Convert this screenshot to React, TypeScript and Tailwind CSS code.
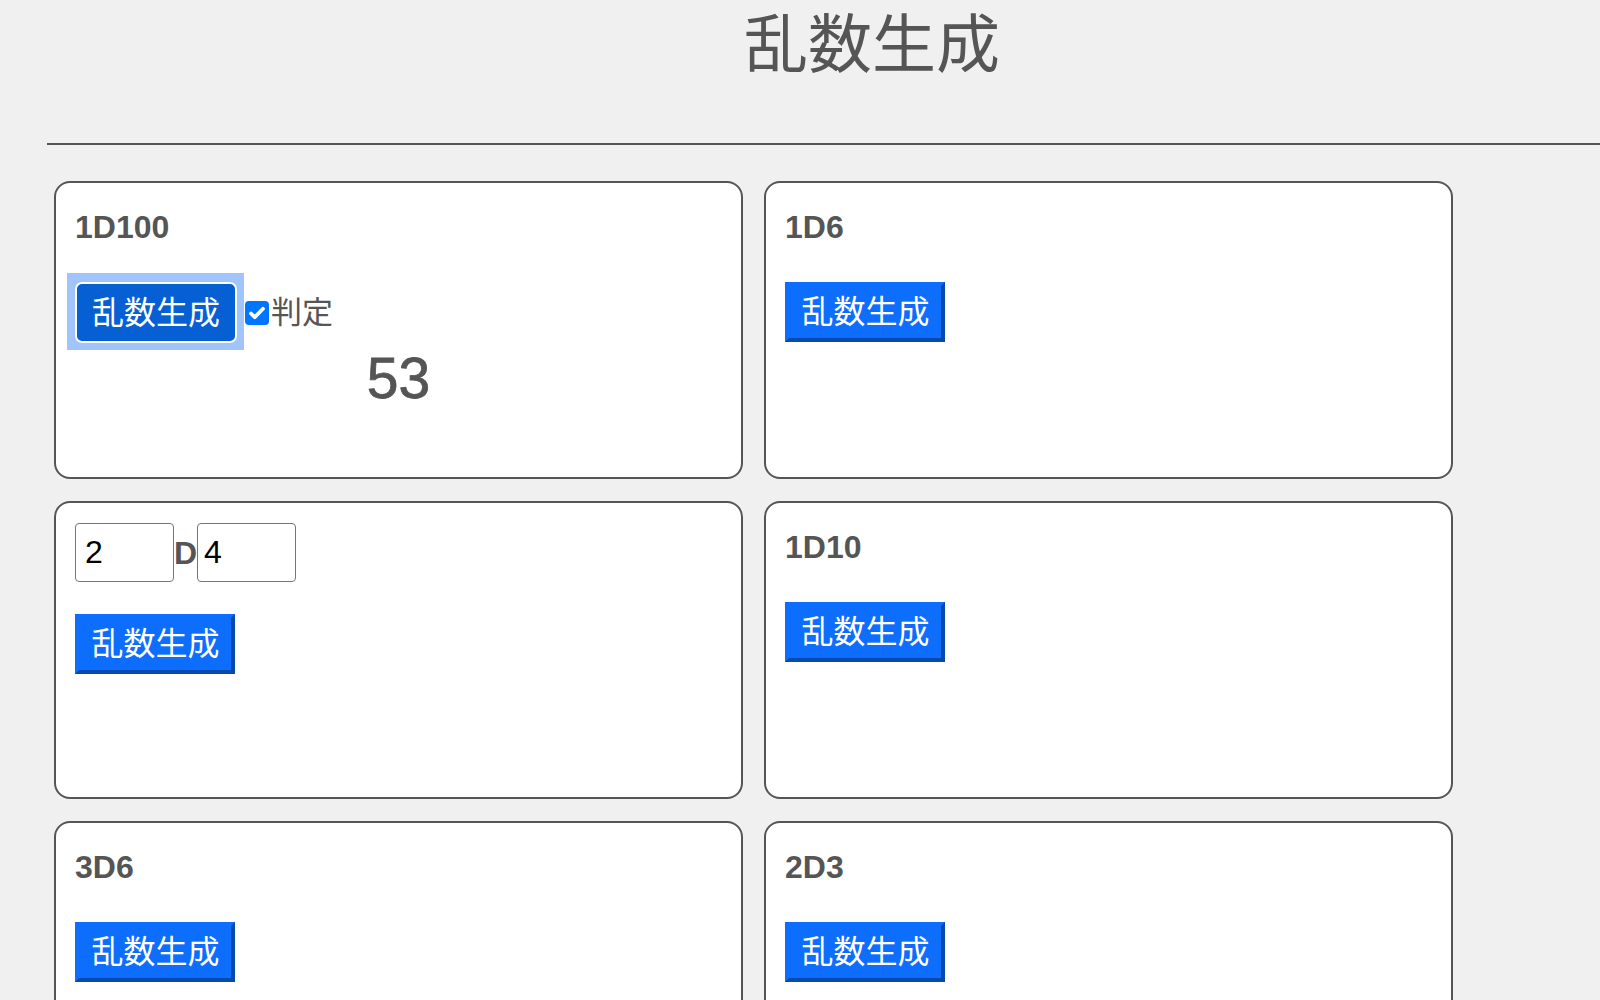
import { useState } from "react"

const font = { fontFamily: '"Liberation Sans", "Noto Sans CJK JP", sans-serif' }

function GenButton({ focused = false }: { focused?: boolean }) {
  if (focused) {
    return (
      <span className="relative inline-block">
        <span className="absolute -left-[8px] -right-[7px] -top-[9px] -bottom-[7px] bg-[#a1c4fd]" />
        <button className="relative flex h-[61px] w-[162px] items-center justify-center rounded-[7px] border-2 border-white bg-[#0660d4] text-[32px] leading-none text-white">
          乱数生成
        </button>
      </span>
    )
  }
  return (
    <button className="flex h-[60px] w-[160px] items-center justify-center border-4 border-[#0d6efd] border-b-[#0849ae] border-r-[#0849ae] bg-[#0d6efd] pl-[1px] text-[32px] leading-none text-white">
      乱数生成
    </button>
  )
}

function Card({ children }: { children: React.ReactNode }) {
  return (
    <div className="h-[298px] rounded-2xl border-2 border-[#555] bg-white px-[19px] py-[20px]">
      {children}
    </div>
  )
}

function DiceCard({ label }: { label: string }) {
  return (
    <Card>
      <div className="mt-[6px] text-[32px] font-bold leading-[37px]">{label}</div>
      <div className="mt-[36px]">
        <GenButton />
      </div>
    </Card>
  )
}

export default function App() {
  const [checked, setChecked] = useState(true)
  const [count, setCount] = useState("2")
  const [sides, setSides] = useState("4")

  return (
    <div className="h-screen w-screen overflow-hidden bg-[#f0f0f0] text-[#555]" style={font}>
      <div className="ml-[47px] w-[1650px]">
        <h1 className="pt-[8px] text-center text-[64px] font-normal leading-[74px]">乱数生成</h1>
        <hr className="mt-[61px] border-0 border-t-2 border-[#555]" />

        <div className="ml-[7px] mt-[36px] grid grid-cols-[689px_689px] gap-x-[21px] gap-y-[22px]">
          {/* 1D100 with 判定 */}
          <Card>
            <div className="mt-[6px] text-[32px] font-bold leading-[37px]">1D100</div>
            <div className="mt-[36px] flex items-center">
              <GenButton focused />
              <button
                onClick={() => setChecked(!checked)}
                className={
                  "ml-[8px] flex h-[24px] w-[24px] items-center justify-center rounded-[4px] " +
                  (checked ? "bg-[#0075ff]" : "border border-[#767676] bg-white")
                }
              >
                {checked && (
                  <svg viewBox="0 0 16 16" className="h-[20px] w-[20px]">
                    <path d="M3.2 8.4l3 3L12.8 4.6" fill="none" stroke="white" strokeWidth="3" strokeLinecap="round" strokeLinejoin="round" />
                  </svg>
                )}
              </button>
              <span className="ml-[2px] text-[31px] leading-none">判定</span>
            </div>
            <div className="mt-[3px] text-center text-[57px] leading-[64px] [-webkit-text-stroke:0.8px_#555]">53</div>
          </Card>

          <DiceCard label="1D6" />

          {/* custom nDm */}
          <Card>
            <div className="flex items-center">
              <input
                value={count}
                onChange={(e) => setCount(e.target.value)}
                className="h-[59px] w-[99px] rounded-[4px] border border-[#767676] bg-white px-[9px] text-[32px] text-black outline-none"
              />
              <span className="text-[32px] font-bold leading-none">D</span>
              <input
                value={sides}
                onChange={(e) => setSides(e.target.value)}
                className="h-[59px] w-[99px] rounded-[4px] border border-[#767676] bg-white px-[6px] text-[32px] text-black outline-none"
              />
            </div>
            <div className="mt-[32px]">
              <GenButton />
            </div>
          </Card>

          <DiceCard label="1D10" />
          <DiceCard label="3D6" />
          <DiceCard label="2D3" />
        </div>
      </div>
    </div>
  )
}
